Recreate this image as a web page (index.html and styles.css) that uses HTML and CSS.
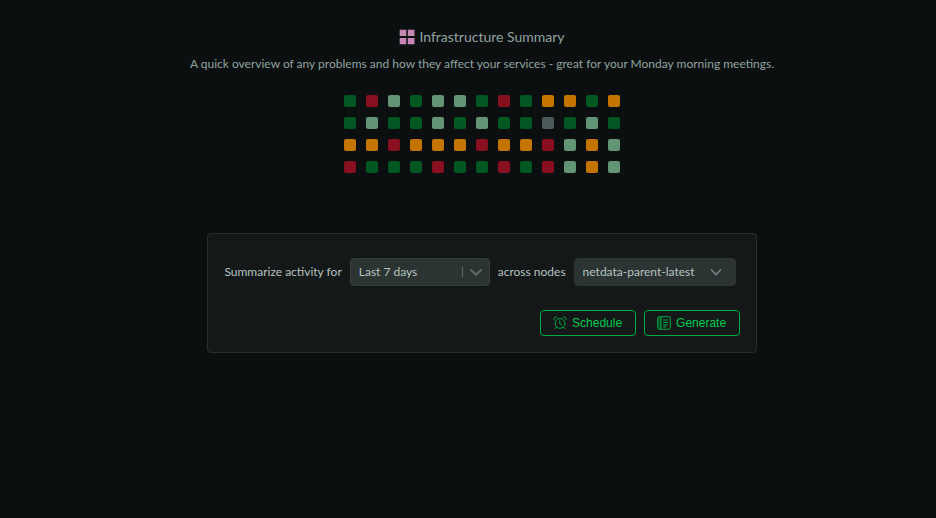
FILE: index.html
```
<!DOCTYPE html>
<html lang="en">
<head>
<meta charset="utf-8">
<meta name="viewport" content="width=device-width, initial-scale=1">
<title>Infrastructure Summary</title>
<link rel="stylesheet" href="styles.css">
</head>
<body>
<main class="page">
  <h1 class="title">
    <svg class="title-icon" viewBox="0 0 16 16" aria-hidden="true"><path d="M.7 .8h6.6v6.3H.7zM8.8 .8h6.7v6.3H8.8zM.7 9h6.6v6.2H.7zM8.8 9h6.7v6.2H8.8z"/></svg>
    Infrastructure Summary
  </h1>
  <p class="lead">A quick overview of any problems and how they affect your services - great for your Monday morning meetings.</p>

  <div class="nodes" aria-hidden="true">
    <i class="ok"></i><i class="crit"></i><i class="calm"></i><i class="ok"></i><i class="calm"></i><i class="calm"></i><i class="ok"></i><i class="crit"></i><i class="ok"></i><i class="warn"></i><i class="warn"></i><i class="ok"></i><i class="warn"></i>
    <i class="ok"></i><i class="calm"></i><i class="ok"></i><i class="ok"></i><i class="calm"></i><i class="ok"></i><i class="calm"></i><i class="ok"></i><i class="ok"></i><i class="off"></i><i class="ok"></i><i class="calm"></i><i class="ok"></i>
    <i class="warn"></i><i class="warn"></i><i class="crit"></i><i class="warn"></i><i class="warn"></i><i class="warn"></i><i class="crit"></i><i class="warn"></i><i class="warn"></i><i class="crit"></i><i class="calm"></i><i class="warn"></i><i class="calm"></i>
    <i class="crit"></i><i class="ok"></i><i class="ok"></i><i class="ok"></i><i class="crit"></i><i class="ok"></i><i class="ok"></i><i class="crit"></i><i class="ok"></i><i class="crit"></i><i class="calm"></i><i class="warn"></i><i class="calm"></i>
  </div>

  <form class="card">
    <div class="filters">
      <label for="period">Summarize activity for</label>
      <div class="picker picker-period">
        <select id="period"><option>Last 7 days</option></select>
        <span class="arrow divided"><svg viewBox="0 0 14 10" aria-hidden="true"><path d="M1.5 2.5L7 7.8l5.5-5.3"/></svg></span>
      </div>
      <label for="nodes">across nodes</label>
      <div class="picker picker-nodes">
        <select id="nodes"><option>netdata-parent-latest</option></select>
        <span class="arrow"><svg viewBox="0 0 14 10" aria-hidden="true"><path d="M2 2.5l5 5 5-5"/></svg></span>
      </div>
    </div>
    <div class="actions">
      <button type="button" class="button">
        <svg viewBox="0 0 14 14" aria-hidden="true"><circle cx="7" cy="7.4" r="4.9"/><path d="M6.8 4.6v3l2 1.6M3.5 11.2l-1.7 1.9M10.5 11.2l1.7 1.9M1.4 4.1C-.2 2.2 2.2 0 4.1 1.3M12.6 4.1C14.2 2.2 11.8 0 9.9 1.3"/></svg>
        Schedule
      </button>
      <button type="button" class="button">
        <svg viewBox="0 0 14 14" aria-hidden="true"><rect x=".7" y=".7" width="12.6" height="12.6" rx="1.6"/><path class="spine" d="M1 1h3v12H1z"/><path d="M4 .7v12.6M6 4h5M6 6.5h5M6 9h5M6 11h3"/></svg>
        Generate
      </button>
    </div>
  </form>
</main>
</body>
</html>
```
FILE: styles.css
```
* { box-sizing: border-box; }

body {
  margin: 0;
  min-height: 100vh;
  background: #0b0f0f;
  color: #b5c3c0;
  font: 12px/20px Lato, "Segoe UI", sans-serif;
}

.page {
  display: flex;
  flex-direction: column;
  align-items: center;
  padding: 27px 0 27px 28px;
}

.title {
  display: flex;
  align-items: center;
  gap: 4px;
  margin: 0;
  color: #91a3a0;
  font-size: 14px;
  font-weight: 400;
  line-height: 20px;
}

.title-icon {
  width: 16px;
  height: 16px;
  fill: #c586b4;
}

.lead {
  margin: 7px 0 0;
  color: #91a3a0;
}

.nodes {
  display: grid;
  grid-template-columns: repeat(13, 12px);
  grid-auto-rows: 12px;
  gap: 10px;
  margin-top: 21px;
}

.nodes i { border-radius: 2px; }
.ok { background: #005721; }
.crit { background: #870f1f; }
.calm { background: #639476; }
.warn { background: #c47500; }
.off { background: #4d5958; }

.card {
  margin-top: 60px;
  padding: 24px 16px 16px;
  border: 1px solid #282e2d;
  border-radius: 4px;
  background: #141818;
}

.filters {
  display: flex;
  align-items: center;
  gap: 8px;
  padding-right: 4px;
}

.picker {
  position: relative;
}

.picker-period { width: 140px; }
.picker-nodes { width: 162px; }

.picker select {
  width: 100%;
  height: 28px;
  padding: 0 8px;
  border: 1px solid #353e3c;
  border-radius: 4px;
  appearance: none;
  background: #2c3433;
  color: #b5c3c0;
  font: inherit;
}

.picker-nodes select {
  border-color: #2c3433;
}

.arrow {
  position: absolute;
  top: 9px;
  right: 13px;
  display: flex;
  pointer-events: none;
}

.divided {
  right: 7px;
  padding-left: 6px;
  border-left: 1px solid #5b6a67;
}

.arrow svg {
  width: 14px;
  height: 10px;
  fill: none;
  stroke: #738583;
  stroke-width: 1.6;
}

.divided svg {
  stroke: #5b6a67;
  stroke-width: 2;
}

.actions {
  display: flex;
  justify-content: flex-end;
  gap: 8px;
  margin-top: 24px;
}

.button {
  display: flex;
  align-items: center;
  justify-content: center;
  gap: 5px;
  width: 96px;
  height: 26px;
  padding: 0;
  border: 1px solid #00ab44;
  border-radius: 4px;
  background: transparent;
  color: #00cb51;
  font: 12px/16px "Liberation Sans", Arial, sans-serif;
}

.button svg {
  width: 14px;
  height: 14px;
  overflow: visible;
  fill: none;
  stroke: #00ab44;
  stroke-width: 1;
}

.button .spine {
  fill: #00ab44;
  fill-opacity: 0.4;
  stroke: none;
}
```
